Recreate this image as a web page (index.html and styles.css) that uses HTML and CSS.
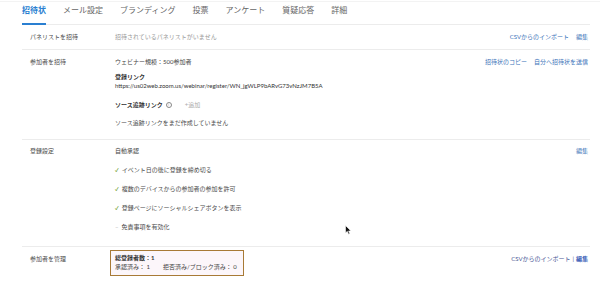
FILE: index.html
```html
<!DOCTYPE html>
<html lang="ja">
<head>
  <meta charset="UTF-8">
  <meta name="viewport" content="width=device-width, initial-scale=1.0">
  <title>招待状</title>
  <link rel="stylesheet" href="styles.css">
</head>
<body>
  <div class="page">
    <!-- Tabs -->
    <nav class="tabs">
      <a class="tab active">招待状</a>
      <a class="tab">メール設定</a>
      <a class="tab">ブランディング</a>
      <a class="tab">投票</a>
      <a class="tab">アンケート</a>
      <a class="tab">質疑応答</a>
      <a class="tab">詳細</a>
    </nav>

    <!-- Panelists -->
    <div class="row">
      <div class="label">パネリストを招待</div>
      <div class="content">
        <p class="muted">招待されているパネリストがいません</p>
      </div>
      <div class="actions">
        <a class="link">CSVからのインポート</a>
        <a class="link">編集</a>
      </div>
    </div>

    <!-- Attendees -->
    <div class="row row-invite">
      <div class="label">参加者を招待</div>
      <div class="content">
        <p>ウェビナー規模：500参加者</p>
        <div class="reg-link">
          <p class="strong">登録リンク</p>
          <p>https://us02web.zoom.us/webinar/register/WN_jgWLP9bARvG73vNzJM7B5A</p>
        </div>
        <p class="source">
          <span class="strong">ソース追跡リンク</span>
          <span class="info">i</span>
          <span class="add">+追加</span>
        </p>
        <p class="source-empty">ソース追跡リンクをまだ作成していません</p>
      </div>
      <div class="actions">
        <a class="link">招待状のコピー</a>
        <a class="link">自分へ招待状を送信</a>
      </div>
    </div>

    <!-- Registration -->
    <div class="row row-settings">
      <div class="label">登録設定</div>
      <div class="content">
        <p>自動承認</p>
        <p class="option"><span class="check">✓</span>イベント日の後に登録を締め切る</p>
        <p class="option"><span class="check">✓</span>複数のデバイスからの参加者の参加を許可</p>
        <p class="option"><span class="check">✓</span>登録ページにソーシャルシェアボタンを表示</p>
        <p class="option"><span class="dash">–</span>免責事項を有効化</p>
      </div>
      <div class="actions">
        <a class="link">編集</a>
      </div>
    </div>

    <!-- Manage attendees -->
    <div class="row row-manage">
      <div class="label">参加者を管理</div>
      <div class="content">
        <div class="summary">
          <p class="strong">総登録者数：1</p>
          <p>承認済み： 1<span class="gap"></span>拒否済み/ブロック済み： 0</p>
        </div>
      </div>
      <div class="actions tight">
        <a class="link dark">CSVからのインポート</a><span class="pipe">|</span><a class="link edit">編集</a>
      </div>
    </div>
  </div>

  <svg class="cursor" width="7" height="10" viewBox="0 0 7 10">
    <path d="M0.5 0.5 L0.5 8 L2.3 6.3 L3.6 9.3 L4.8 8.8 L3.6 5.9 L6 5.9 Z" fill="#111" stroke="#fff" stroke-width="0.6"/>
  </svg>
</body>
</html>
```

FILE: styles.css
```css
body {
  margin: 0;
  padding: 0;
  background: #fff;
  font-family: Lato, "Noto Sans CJK JP", sans-serif;
  color: #444;
}
p {
  margin: 0;
}
.page {
  padding: 0 10px 0 22px;
  border-top: 1px solid #f3f3f3;
  margin-top: 1px;
}
.tabs {
  display: flex;
  gap: 17px;
  border-bottom: 1px solid #ececec;
}
.tab {
  font-size: 8px;
  line-height: 10px;
  padding: 3px 0 8px;
  color: #666;
  border-bottom: 2px solid transparent;
  margin-bottom: -1px;
}
.tab.active {
  color: #2a7fd1;
  font-weight: bold;
  border-bottom-color: #2a7fd1;
}
.row {
  display: grid;
  grid-template-columns: 85px 1fr auto;
  padding: 8px 2px 8px 8px;
  border-bottom: 1px solid #ececec;
  font-size: 6px;
  line-height: 8px;
}
.label {
  color: #4a4a4a;
}
.muted {
  color: #999;
}
.strong {
  font-weight: bold;
  color: #333;
}
.actions {
  display: flex;
  gap: 7px;
}
.actions.tight {
  gap: 0;
}
.link {
  color: #3b73b9;
}
.link.dark {
  color: #4a5796;
}
.link.edit {
  color: #3d5fb8;
  font-weight: bold;
}
.pipe {
  color: #4a5796;
  margin: 0 2px;
}
.reg-link {
  margin-top: 6px;
  line-height: 9px;
  color: #333;
}
.source {
  margin-top: 11px;
  display: flex;
  align-items: center;
}
.info {
  display: inline-block;
  width: 4px;
  height: 4px;
  border: 0.6px solid #888;
  border-radius: 50%;
  font-size: 3px;
  line-height: 4px;
  text-align: center;
  color: #888;
  margin: 0 0 0 3px;
}
.add {
  color: #aaa;
  margin-left: 13px;
}
.source-empty {
  margin-top: 10px;
  color: #4a4a4a;
}
.row-invite {
  padding-bottom: 12px;
}
.row-settings {
  padding-top: 7px;
  padding-bottom: 15px;
}
.option {
  margin-top: 11px;
  color: #4a4a4a;
}
.check {
  color: #6f9e2e;
  font-size: 5px;
  font-weight: bold;
  margin-right: 3px;
}
.dash {
  color: #b5b5b5;
  margin-right: 3px;
}
.row-manage {
  padding-top: 3px;
  border-bottom: none;
}
.row-manage .label,
.row-manage .actions {
  padding-top: 5px;
}
.summary {
  width: fit-content;
  margin-left: -5px;
  padding: 3px 6px 4px 4px;
  border: 1.5px solid #a87a36;
  background: #fcf6fa;
  line-height: 9px;
  color: #444;
}
.summary .strong {
  line-height: 8px;
}
.gap {
  display: inline-block;
  width: 13px;
}
.cursor {
  position: absolute;
  left: 345px;
  top: 225px;
}
```
